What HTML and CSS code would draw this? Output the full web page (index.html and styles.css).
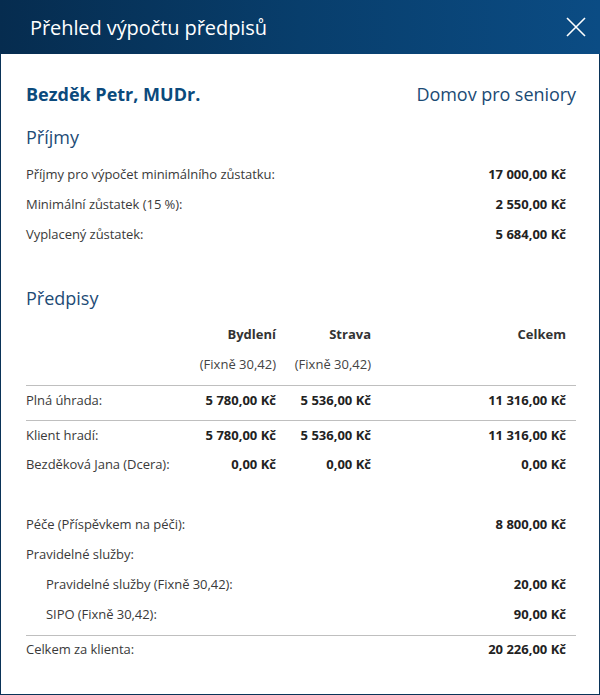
FILE: index.html
```html
<!DOCTYPE html>
<html lang="cs">
<head>
<meta charset="utf-8">
<title>Přehled výpočtu předpisů</title>
<link rel="stylesheet" href="styles.css">
</head>
<body>
<div class="dialog">
  <header class="dlg-head">
    <h1 class="dlg-title">Přehled výpočtu předpisů</h1>
    <button class="dlg-close" aria-label="Zavřít">
      <svg width="20" height="20" viewBox="0 0 20 20"><path d="M1 1 L19 19 M19 1 L1 19" stroke="#fff" stroke-width="1.6" fill="none"/></svg>
    </button>
  </header>
  <div class="dlg-body">
    <div class="client">
      <span class="client-name">Bezděk Petr, MUDr.</span>
      <span class="client-home">Domov pro seniory</span>
    </div>

    <h2 class="section-title">Příjmy</h2>
    <div class="kv"><span class="lbl">Příjmy pro výpočet minimálního zůstatku:</span><span class="val">17 000,00 Kč</span></div>
    <div class="kv"><span class="lbl">Minimální zůstatek (15 %):</span><span class="val">2 550,00 Kč</span></div>
    <div class="kv"><span class="lbl">Vyplacený zůstatek:</span><span class="val">5 684,00 Kč</span></div>

    <h2 class="section-title section-title-2">Předpisy</h2>
    <div class="prow phead"><span></span><span class="num">Bydlení</span><span class="num">Strava</span><span class="num">Celkem</span></div>
    <div class="prow psub"><span></span><span class="num">(Fixně 30,42)</span><span class="num">(Fixně 30,42)</span><span></span></div>
    <div class="prow sep"><span class="lbl">Plná úhrada:</span><span class="num val">5 780,00 Kč</span><span class="num val">5 536,00 Kč</span><span class="num val">11 316,00 Kč</span></div>
    <div class="prow sep"><span class="lbl">Klient hradí:</span><span class="num val">5 780,00 Kč</span><span class="num val">5 536,00 Kč</span><span class="num val">11 316,00 Kč</span></div>
    <div class="prow"><span class="lbl">Bezděková Jana (Dcera):</span><span class="num val">0,00 Kč</span><span class="num val">0,00 Kč</span><span class="num val">0,00 Kč</span></div>

    <div class="kv gap"><span class="lbl">Péče (Příspěvkem na péči):</span><span class="val">8 800,00 Kč</span></div>
    <div class="kv"><span class="lbl">Pravidelné služby:</span><span class="val"></span></div>
    <div class="kv indent"><span class="lbl">Pravidelné služby (Fixně 30,42):</span><span class="val">20,00 Kč</span></div>
    <div class="kv indent"><span class="lbl">SIPO (Fixně 30,42):</span><span class="val">90,00 Kč</span></div>
    <div class="kv sep total"><span class="lbl">Celkem za klienta:</span><span class="val">20 226,00 Kč</span></div>
  </div>
</div>
</body>
</html>
```

FILE: styles.css
```css
* { box-sizing: border-box; }
html, body { margin: 0; padding: 0; background: #fff; }
body { font-family: "Open Sans", "Noto Sans", sans-serif; color: #333; }

.dialog {
  width: 600px;
  height: 695px;
  border: 1px solid #0a3358;
  border-top: none;
  background: #fff;
  display: flex;
  flex-direction: column;
}

.dlg-head {
  height: 54px;
  margin: 0 -1px;
  background: linear-gradient(90deg, #062c4f 0%, #083e6c 50%, #0b4c84 100%);
  display: flex;
  align-items: center;
  justify-content: space-between;
  padding: 0 14px 0 30px;
}
.dlg-title {
  margin: 0;
  font-size: 20px;
  font-weight: 400;
  color: #fff;
  line-height: 24px;
  padding-top: 2px;
  letter-spacing: -0.08px;
}
.dlg-close {
  background: none;
  border: none;
  padding: 0;
  width: 20px;
  height: 20px;
  display: flex;
  cursor: pointer;
}

.dlg-body {
  padding: 28px 23px 0 25px;
}

.client {
  display: flex;
  justify-content: space-between;
  align-items: center;
  line-height: 24px;
  font-size: 18px;
}
.client-name { font-weight: 700; color: #0b4a7c; }
.client-home { color: #1b4a74; letter-spacing: -0.05px; }

.section-title {
  margin: 19px 0 10px;
  font-size: 18px;
  font-weight: 400;
  line-height: 24px;
  color: #1d4b76;
}
.section-title-2 { margin-top: 37px; margin-bottom: 9px; }

.kv {
  display: flex;
  justify-content: space-between;
  align-items: center;
  font-size: 13px;
  line-height: 30px;
  padding-right: 10px;
}
.lbl { color: #3a3a3a; letter-spacing: -0.05px; }
.val { font-weight: 700; color: #222; }

.prow {
  display: grid;
  grid-template-columns: 160px 90px 95px 1fr;
  font-size: 13px;
  line-height: 30px;
  padding-right: 10px;
}
.num { text-align: right; }
.phead .num { font-weight: 700; color: #333; }
.psub .num { color: #444; }

.sep {
  margin-top: 6px;
  border-top: 1px solid #bfbfbf;
  line-height: 28px;
}

.gap { margin-top: 30px; }
.indent { padding-left: 20px; }
.total { line-height: 27px; }
```
